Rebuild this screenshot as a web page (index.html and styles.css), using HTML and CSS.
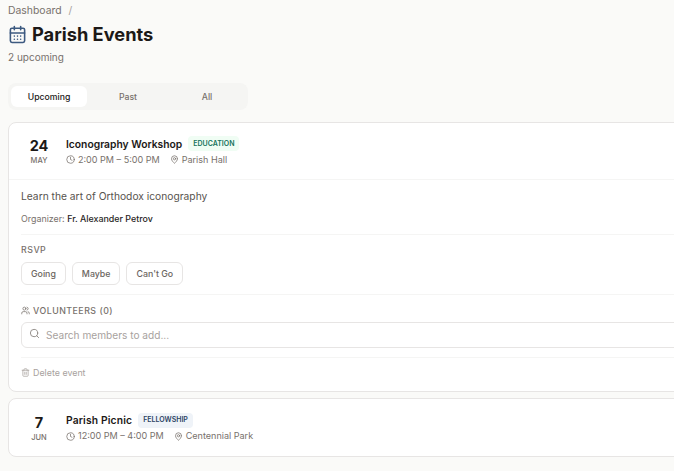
FILE: index.html
```html
<!DOCTYPE html>
<html lang="en">
<head>
<meta charset="utf-8">
<title>Parish Events</title>
<link rel="stylesheet" href="styles.css">
</head>
<body>
<main class="page">
  <nav class="crumbs"><span>Dashboard</span><span class="sep">/</span></nav>
  <header class="head">
    <svg class="cal" viewBox="0 0 24 24" fill="none" stroke="currentColor" stroke-width="2" stroke-linecap="round" stroke-linejoin="round"><path d="M8 2v4M16 2v4"/><rect x="3" y="4" width="18" height="18" rx="2"/><path d="M3 10h18M8 14h.01M12 14h.01M16 14h.01M8 18h.01M12 18h.01M16 18h.01"/></svg>
    <h1>Parish Events</h1>
  </header>
  <p class="sub">2 upcoming</p>
  <div class="tabs">
    <button class="tab active">Upcoming</button>
    <button class="tab">Past</button>
    <button class="tab">All</button>
  </div>
  <article class="card">
    <div class="top">
      <div class="date"><b>24</b><span>MAY</span></div>
      <div class="info">
        <div class="line"><h2>Iconography Workshop</h2><span class="tag green">EDUCATION</span></div>
        <div class="meta">
          <span class="mi"><svg class="ico" viewBox="0 0 24 24" fill="none" stroke="currentColor" stroke-width="2" stroke-linecap="round" stroke-linejoin="round"><circle cx="12" cy="12" r="10"/><path d="M12 6v6l4 2"/></svg>2:00 PM – 5:00 PM</span>
          <span class="mi"><svg class="ico" viewBox="0 0 24 24" fill="none" stroke="currentColor" stroke-width="2" stroke-linecap="round" stroke-linejoin="round"><path d="M20 10c0 5-5.500 10-8 12-2.500-2-8-7-8-12a8 8 0 0 1 16 0"/><circle cx="12" cy="10" r="3"/></svg>Parish Hall</span>
        </div>
      </div>
    </div>
    <div class="body">
      <p class="desc">Learn the art of Orthodox iconography</p>
      <p class="org">Organizer: <strong>Fr. Alexander Petrov</strong></p>
      <section class="rsvp">
        <h3>RSVP</h3>
        <div class="btns"><button>Going</button><button>Maybe</button><button>Can't Go</button></div>
      </section>
      <section class="vol">
        <h3 class="volh"><svg class="ico" viewBox="0 0 24 24" fill="none" stroke="currentColor" stroke-width="2" stroke-linecap="round" stroke-linejoin="round"><path d="M16 21v-2a4 4 0 0 0-4-4H6a4 4 0 0 0-4 4v2"/><circle cx="9" cy="7" r="4"/><path d="M22 21v-2a4 4 0 0 0-3-3.900M16 3.100a4 4 0 0 1 0 7.800"/></svg>VOLUNTEERS (0)</h3>
        <div class="search"><svg class="sico" viewBox="0 0 24 24" fill="none" stroke="currentColor" stroke-width="2" stroke-linecap="round" stroke-linejoin="round"><circle cx="11" cy="11" r="8"/><path d="m21 21-4.300-4.300"/></svg><span>Search members to add...</span></div>
      </section>
      <div class="foot"><svg class="ico" viewBox="0 0 24 24" fill="none" stroke="currentColor" stroke-width="2" stroke-linecap="round" stroke-linejoin="round"><path d="M3 6h18M19 6v14a2 2 0 0 1-2 2H7a2 2 0 0 1-2-2V6M8 6V4a2 2 0 0 1 2-2h4a2 2 0 0 1 2 2v2M10 11v6M14 11v6"/></svg>Delete event</div>
    </div>
  </article>
  <article class="card">
    <div class="top plain">
      <div class="date"><b>7</b><span>JUN</span></div>
      <div class="info">
        <div class="line"><h2 class="wide">Parish Picnic</h2><span class="tag blue">FELLOWSHIP</span></div>
        <div class="meta">
          <span class="mi"><svg class="ico" viewBox="0 0 24 24" fill="none" stroke="currentColor" stroke-width="2" stroke-linecap="round" stroke-linejoin="round"><circle cx="12" cy="12" r="10"/><path d="M12 6v6l4 2"/></svg>12:00 PM – 4:00 PM</span>
          <span class="mi"><svg class="ico" viewBox="0 0 24 24" fill="none" stroke="currentColor" stroke-width="2" stroke-linecap="round" stroke-linejoin="round"><path d="M20 10c0 5-5.500 10-8 12-2.500-2-8-7-8-12a8 8 0 0 1 16 0"/><circle cx="12" cy="10" r="3"/></svg>Centennial Park</span>
        </div>
      </div>
    </div>
  </article>
</main>
</body>
</html>
```
FILE: styles.css
```css
* { box-sizing: border-box; }
html, body { margin: 0; height: 100%; overflow: hidden; background: #fafaf8; }
body { font-family: Inter, "Liberation Sans", sans-serif; color: #1c1917; }
.page { width: 760px; padding: 4px 0 0 8px; }
.crumbs { display: flex; gap: 7px; font-size: 10.400px; line-height: 14px; color: #78716c; }
.sep { color: #a8a29e; }
.head { display: flex; align-items: center; gap: 5px; margin-top: 3px; height: 26px; }
.cal { width: 19px; height: 19px; color: #3d5a80; }
h1 { margin: 0; font-size: 18.250px; line-height: 26px; font-weight: 700; }
.sub { margin: 3px 0 0; font-size: 10px; line-height: 14px; color: #78716c; }
.tabs { display: grid; grid-template-columns: 76px 82px 76px; width: 240px; height: 27px; margin-top: 19px; padding: 3px; border-radius: 8px; background: #f5f5f3; }
.tab { border: 0; border-radius: 6px; background: none; padding: 0; font: 500 8.700px Inter, sans-serif; color: #78716c; }
.tab.active { background: #fff; color: #1c1917; }
.card { margin-top: 12px; background: #fff; border: 1px solid #e7e5e4; border-radius: 8px; }
.card + .card { margin-top: 6px; }
.top { display: flex; height: 57px; padding: 0 12px; align-items: center; border-bottom: 1px solid #f5f5f4; }
.top.plain { border: 0; height: 57px; }
.date { width: 36px; margin-right: 9px; padding-top: 1px; display: flex; flex-direction: column; align-items: center; }
.date b { font-size: 14.500px; line-height: 18px; font-weight: 700; }
.date span { margin-top: 1px; font-size: 7.500px; line-height: 10px; font-weight: 500; color: #78716c; }
.info { display: flex; flex-direction: column; gap: 2px; padding-bottom: 1px; }
.line { display: flex; align-items: center; gap: 6px; height: 16px; }
h2 { margin: 0; font-size: 10.300px; line-height: 14px; font-weight: 600; }
h2.wide { letter-spacing: 0.15px; }
.tag { padding: 2.500px 5px; border-radius: 4px; font-size: 7px; line-height: 10px; font-weight: 600; }
.green { background: #f0fdf4; color: #15735b; }
.blue { background: #eff3f8; color: #2c4364; }
.meta { display: flex; gap: 10px; font-size: 9.050px; line-height: 12px; color: #78716c; }
.mi { display: flex; align-items: center; gap: 3px; }
.ico { width: 9px; height: 9px; flex: none; }
.body { padding: 0 0 0 12px; }
.desc { margin: 9px 0 0; font-size: 10.250px; line-height: 14px; color: #57534e; }
.org { margin: 10px 0 0; font-size: 8.900px; line-height: 12px; color: #78716c; }
.org strong { font-weight: 500; color: #292524; }
.rsvp { margin-top: 9px; padding-top: 9px; border-top: 1px solid #f5f5f4; }
h3 { margin: 0; font-size: 8.800px; line-height: 11px; font-weight: 500; letter-spacing: 0.5px; color: #78716c; }
.btns { display: flex; gap: 6px; margin-top: 7px; }
.btns button { height: 23px; padding: 0 9px; background: #fff; border: 1px solid #e7e5e4; border-radius: 6px; font: 500 8.800px Inter, sans-serif; color: #6b6560; }
.vol { margin-top: 9px; padding-top: 10px; border-top: 1px solid #f5f5f4; }
.volh { display: flex; align-items: center; gap: 3px; }
.search { display: flex; align-items: center; gap: 6px; height: 26px; margin-top: 6px; padding: 0 7px; border: 1px solid #e7e5e4; border-radius: 6px; font-size: 10.150px; color: #a8a29e; }
.sico { width: 11px; height: 11px; margin-bottom: 3px; color: #8c8782; }
.foot { display: flex; align-items: center; gap: 3px; height: 34px; margin-top: 9px; padding-bottom: 4px; border-top: 1px solid #f5f5f4; font-size: 8.900px; color: #a8a29e; }
```
